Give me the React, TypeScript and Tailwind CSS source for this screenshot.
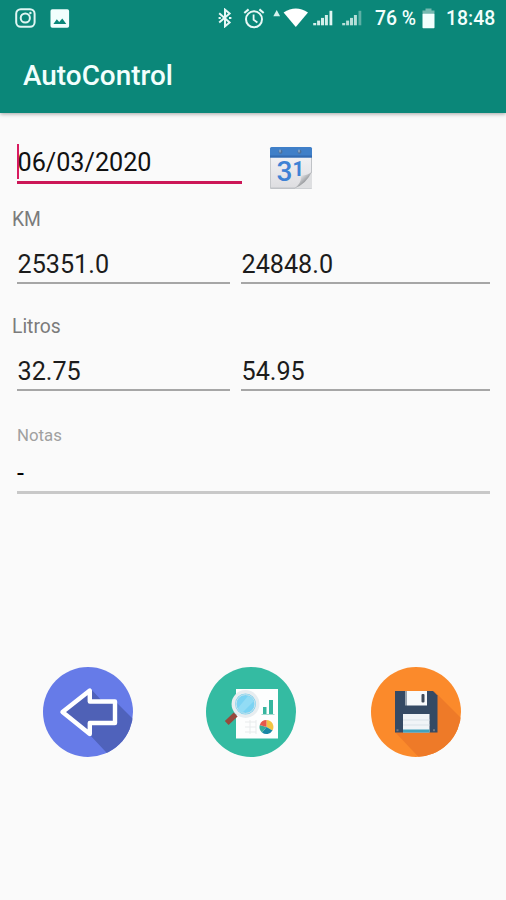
import type { ReactNode } from "react";

function InstagramIcon() {
  return (
    <svg width="21" height="20" viewBox="0 0 21 20" fill="none" stroke="#e0f6f3" strokeWidth="2">
      <rect x="1.2" y="1.2" width="18.4" height="17.6" rx="4.6" />
      <circle cx="10.3" cy="10" r="4.6" />
      <circle cx="15.4" cy="5" r="1.2" fill="#e0f6f3" stroke="none" />
    </svg>
  );
}

function PhotoIcon() {
  return (
    <svg width="20" height="19" viewBox="0 0 20 19">
      <rect x="0.5" y="0.3" width="18.6" height="18.4" rx="1.8" fill="#f2fffd" />
      <path d="M3.4 14.9 6.8 10.2 9.2 13 12.3 9.6 16.3 14.9Z" fill="#0b8779" />
    </svg>
  );
}

function BluetoothIcon() {
  return (
    <svg width="14" height="20" viewBox="0 0 14 20" fill="none" stroke="#e8f8f6" strokeWidth="2">
      <path d="M1.2 5.2 11.6 14.4 7 18.3V1.7L11.6 5.6 1.2 14.6" />
      <path d="M0.6 9.9h2.2M11 9.9h2.4" strokeWidth="2" />
    </svg>
  );
}

function AlarmIcon() {
  return (
    <svg width="22" height="21" viewBox="0 0 22 21" fill="none" stroke="#e8f8f6" strokeWidth="2">
      <circle cx="11" cy="11.3" r="8" />
      <path d="M1.3 5 5.6 1.4M20.7 5 16.4 1.4" strokeWidth="2.1" />
      <path d="M10.6 6.6v5.2l3.8 2.6" strokeWidth="1.8" />
    </svg>
  );
}

function WifiIcon() {
  return (
    <svg width="36" height="20" viewBox="0 0 36 20" fill="#fff">
      <path d="M.3 8.2 3.7 2 7.1 8.2Z" fill="#d5f1ed" />
      <path d="M10.6 4.6Q22.8 -3.8 35 4.6L22.8 19Z" />
    </svg>
  );
}

function SignalIcon({ dim }: { dim?: boolean }) {
  return (
    <svg width="20" height="16" viewBox="0 0 20 16" fill={dim ? "#b7dfd9" : "#d4efeb"}>
      <rect x="0.2" y="13" width="3" height="2.3" />
      <rect x="4.1" y="10.6" width="3" height="4.7" />
      <rect x="8" y="7.9" width="3" height="7.4" />
      <rect x="11.9" y="5" width="3" height="10.3" />
      <rect x="16.5" y="0.8" width="2.8" height="14.5" fill={dim ? "#5fb0a6" : "#e2f5f2"} />
    </svg>
  );
}

function BatteryIcon() {
  return (
    <svg width="13" height="21" viewBox="0 0 13 21">
      <path d="M.5 6V2.6h3V.4h6v2.2h3V6Z" fill="#75b9b0" />
      <rect x="0.5" y="5.7" width="12" height="14.6" rx="0.7" fill="#f2fffd" />
    </svg>
  );
}

function CalendarIcon() {
  return (
    <svg width="44" height="44" viewBox="0 0 44 44">
      <defs>
        <linearGradient id="page" x1="0" y1="0" x2="0" y2="1">
          <stop offset="0" stopColor="#f1f1f4" />
          <stop offset="1" stopColor="#dedee1" />
        </linearGradient>
        <linearGradient id="curl" x1="0" y1="0" x2="1" y2="1">
          <stop offset="0.25" stopColor="#f4f4f5" />
          <stop offset="0.5" stopColor="#b5b7ba" />
          <stop offset="0.75" stopColor="#6f7276" />
        </linearGradient>
      </defs>
      <rect x="1" y="2" width="42" height="41" rx="1" fill="#bfc2c6" />
      <rect x="1.8" y="10" width="40.2" height="31.5" fill="url(#page)" />
      <path d="M1 2.5Q1 1 2.5 1H41.5Q43 1 43 2.5V11.5H1Z" fill="#3f7fc8" />
      <path d="M1 9.5H43V11.5H1Z" fill="#326bb1" />
      <circle cx="11.5" cy="5.7" r="2" fill="#4c6f98" />
      <circle cx="30.5" cy="5.7" r="2" fill="#4c6f98" />
      <path d="M11 3.7v2.7M30 3.7v2.7" stroke="#a9c8ea" />
      <text x="7.5" y="35.3" fontFamily="Roboto, sans-serif" fontSize="28" fontWeight="500" fill="#3e82d5">
        3
      </text>
      <text x="23.5" y="29.5" fontFamily="Roboto, sans-serif" fontSize="20" fontWeight="700" fill="#3e82d5">
        1
      </text>
      <path d="M43 26V42.5H25.5Q35 38 43 26Z" fill="#dedfe1" />
      <path d="M43 25.5Q39 29.5 32 29.5Q32.5 38 25 42.5Q37 38.5 43 25.5Z" fill="url(#curl)" />
    </svg>
  );
}

function BackIcon() {
  return (
    <svg width="90" height="90" viewBox="0 0 90 90">
      <defs>
        <clipPath id="backClip"><circle cx="45" cy="45" r="45" /></clipPath>
      </defs>
      <circle cx="45" cy="45" r="45" fill="#667be8" />
      <g clipPath="url(#backClip)">
        <path d="M48 22 59 34 72 34 100 62V100H77L46 67 19 45Z" fill="#4f62bb" />
      </g>
      <path d="M19.5 45 46.8 23.5V34.5H72V56H46.8V67Z" fill="#4f61b6" stroke="#fff" strokeWidth="4.4" strokeLinejoin="round" />
    </svg>
  );
}

function ReportIcon() {
  return (
    <svg width="90" height="90" viewBox="0 0 90 90">
      <circle cx="45" cy="45" r="45" fill="#34bba2" />
      <rect x="30" y="22" width="42" height="49.5" fill="#fdfefe" />
      <rect x="57" y="40" width="3.5" height="7.7" fill="#36b69f" />
      <rect x="63" y="33" width="4" height="14.7" fill="#36b69f" />
      <path d="M55.5 47.5H68.5" stroke="#a5dccf" />
      <path d="M39 55h11M39 60h11M39 65h11M44 53v14M50 53v14" stroke="#e8ebec" />
      <path d="M60.5 60V53A7 7 0 0 1 66.5 63.5Z" fill="#f2c443" />
      <path d="M60.5 60 66.5 63.5A7 7 0 0 1 56 65.4Z" fill="#1887a5" />
      <path d="M60.5 60 56 65.4A7 7 0 0 1 53.8 58Z" fill="#36ac98" />
      <path d="M60.5 60 53.8 58A7 7 0 0 1 60.5 53Z" fill="#e5584b" />
      <path d="M31 45.5 27 49.5" stroke="#a5bdc1" strokeWidth="3" />
      <path d="M29.7 47.4 20.7 56" stroke="#964a3d" strokeWidth="5.5" />
      <circle cx="39.5" cy="37" r="12.2" fill="#81d2ee" stroke="#e7edf0" strokeWidth="3.5" />
      <circle cx="39.5" cy="37" r="9.4" fill="#7bd3f3" stroke="#c9e3ec" strokeWidth="1" />
      <path d="M32 41 42 29Q46 30 48 34L36 46Q33 44.5 32 41Z" fill="#92dcf5" />
    </svg>
  );
}

function SaveIcon() {
  return (
    <svg width="90" height="90" viewBox="0 0 90 90">
      <defs>
        <clipPath id="saveClip"><circle cx="45" cy="45" r="45" /></clipPath>
      </defs>
      <circle cx="45" cy="45" r="45" fill="#fb8a2b" />
      <g clipPath="url(#saveClip)">
        <path d="M63 24 100 61V100H57L24 65Z" fill="#ee7a28" />
      </g>
      <path d="M24 24H62L66.5 28.5V65.5H24Z" fill="#354a64" />
      <rect x="25.5" y="62.2" width="2" height="2" fill="#6f7782" />
      <rect x="62" y="62.2" width="2" height="2" fill="#6f7782" />
      <rect x="34" y="24" width="2" height="14.5" fill="#9aa5b0" />
      <rect x="36" y="24" width="20" height="14.5" fill="#f8fafb" />
      <rect x="50.5" y="27" width="3" height="8.5" rx="1" fill="#3f4a59" />
      <rect x="32" y="47" width="26.5" height="18.5" fill="#f0f4f7" />
      <path d="M32 53h26.5M32 58h26.5" stroke="#d9e2e8" />
      <rect x="32" y="62.5" width="26.5" height="3" fill="#43a2bd" />
    </svg>
  );
}

function Field({ value, className }: { value: string; className: string }) {
  return (
    <div className={`h-[38px] border-b-2 border-[#a6a6a6] pl-[0.5px] text-[25.2px] leading-[38px] text-[#1c1c1c] ${className}`}>
      {value}
    </div>
  );
}

function RoundButton({ label, children }: { label: string; children: ReactNode }) {
  return (
    <button type="button" aria-label={label} className="size-[90px] rounded-full">
      {children}
    </button>
  );
}

export default function App() {
  return (
    <div className="flex h-[900px] w-[506px] flex-col overflow-hidden bg-[#fafafa] font-['Roboto',sans-serif]">
      <header className="h-[113px] shrink-0 bg-[#0b8779] text-[#f2fffd] shadow-[0_1px_4px_rgba(0,0,0,0.35)]">
        <div className="flex h-9 items-center pr-[11px] pl-[15px] text-[19.4px] font-medium">
          <InstagramIcon />
          <div className="ml-[14px]"><PhotoIcon /></div>
          <div className="ml-auto"><BluetoothIcon /></div>
          <div className="ml-[11px]"><AlarmIcon /></div>
          <div className="ml-[8px]"><WifiIcon /></div>
          <div className="mt-[-1px] ml-[4px]"><SignalIcon /></div>
          <div className="mt-[-1px] ml-[9px]"><SignalIcon dim /></div>
          <span className="mt-[2px] ml-[13px] w-[42px] whitespace-nowrap">76 %</span>
          <div className="ml-[5px]"><BatteryIcon /></div>
          <span className="mt-[2px] ml-[11px] w-[49px] whitespace-nowrap">18:48</span>
        </div>
        <h1 className="pt-[22px] pl-[23px] text-[27.9px] leading-9 font-medium">AutoControl</h1>
      </header>

      <main className="flex flex-col pt-[31px]">
        <div className="flex h-[45px] items-start pl-[17px]">
          <div className="relative h-10 w-[225px] border-b-[3px] border-[#cc1657] pl-[0.5px] text-[25.2px] leading-[38px] text-[#111]">
            06/03/2020
            <span className="absolute top-0 left-0 h-[35px] w-[2px] bg-[#d81b60]" />
          </div>
          <div className="mt-[2px] ml-[27px]"><CalendarIcon /></div>
        </div>

        <label className="mt-[18px] h-6 pl-3 text-[19.3px] leading-[26px] text-[#7b7b7b]">KM</label>
        <div className="mt-[15px] flex gap-[11px] pl-[17px]">
          <Field value="25351.0" className="w-[213px]" />
          <Field value="24848.0" className="w-[249px]" />
        </div>

        <label className="mt-[30px] h-6 pl-3 text-[19.3px] leading-[26px] text-[#7b7b7b]">Litros</label>
        <div className="mt-[15px] flex gap-[11px] pl-[17px]">
          <Field value="32.75" className="w-[213px]" />
          <Field value="54.95" className="w-[249px]" />
        </div>

        <label className="mt-[34px] h-5 pl-[17px] text-[16.8px] leading-5 text-[#a0a0a0]">Notas</label>
        <div className="mt-[10px] ml-[17px] h-[39px] w-[473px] border-b-[3px] border-[#c8c8c8] text-[25.2px] leading-[38px] text-black">-</div>

        <div className="mt-[173px] flex pl-[43px]">
          <RoundButton label="Volver"><BackIcon /></RoundButton>
          <div className="ml-[73px] flex gap-[75px]">
            <RoundButton label="Informe"><ReportIcon /></RoundButton>
            <RoundButton label="Guardar"><SaveIcon /></RoundButton>
          </div>
        </div>
      </main>
    </div>
  );
}
